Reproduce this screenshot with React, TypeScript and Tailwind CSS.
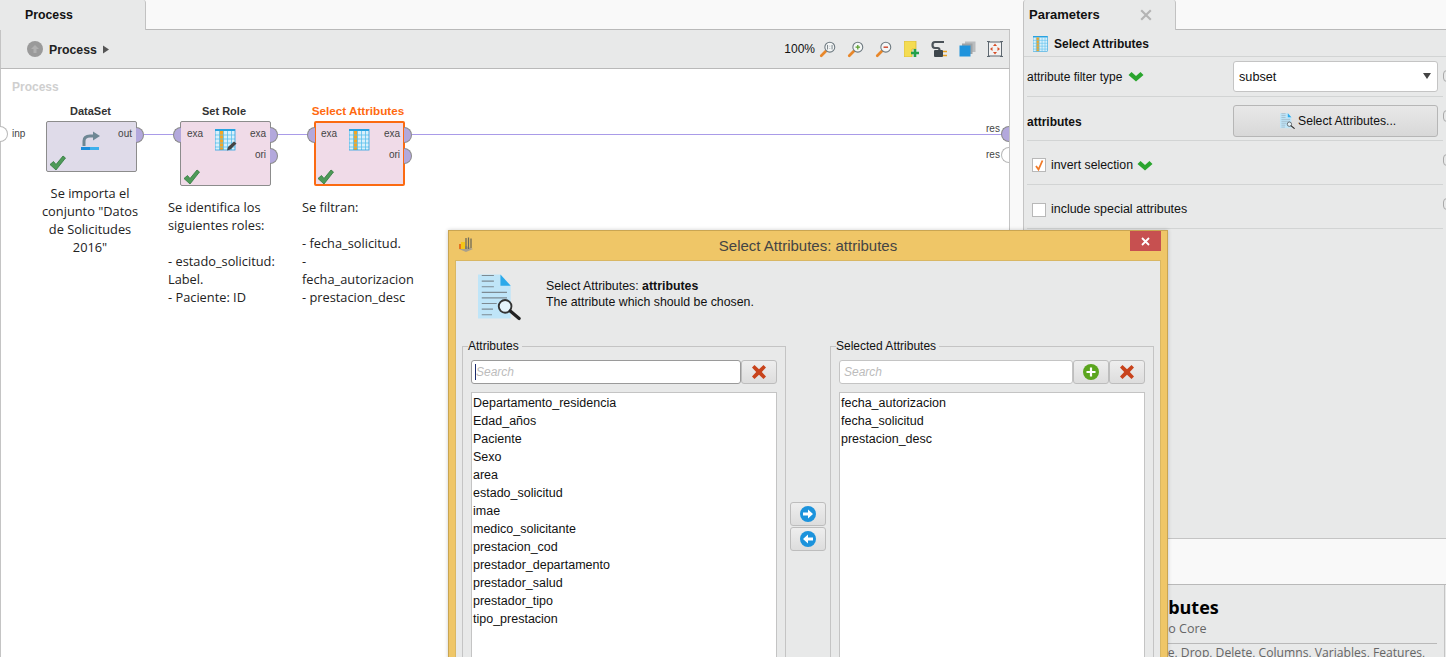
import React from "react";

const SANS = "font-['Liberation_Sans',Arial,sans-serif]";
const OPEN = "font-['Open_Sans','Noto_Sans',sans-serif]";

function Check({ className = "" }: { className?: string }) {
  return (
    <svg viewBox="0 0 17 16" className={className}>
      <path d="M1 9.5 L4.5 6.5 L7 9.5 L14 1 L16.5 3 L7 15 Z" fill="#4e9a58" stroke="#2f7a3c" strokeWidth="0.8" />
    </svg>
  );
}

function GreenChevron() {
  return (
    <svg viewBox="0 0 16 11" className="w-[16px] h-[11px]">
      <path d="M0.5 4 L3.5 1 L8 5 L12.5 1 L15.5 4 L8 10.5 Z" fill="#2aa52e" />
    </svg>
  );
}

function TableIcon({ pen = false, small = false }: { pen?: boolean; small?: boolean }) {
  const cols = [3, 7, 11, 15];
  return (
    <svg viewBox="0 0 22 22" className={small ? "w-[16px] h-[16px]" : "w-[22px] h-[22px]"}>
      <rect x="0" y="0" width="20" height="21" fill="#d8f0fb" />
      <rect x="0" y="0" width="20" height="2" fill="#2aa3e0" />
      <rect x="4.5" y="2" width="4" height="19" fill="#f5a623" />
      {cols.map((c) => (
        <line key={c} x1={c + 1.5} y1="2" x2={c + 1.5} y2="21" stroke="#5cc0ee" strokeWidth="0.8" />
      ))}
      {[6, 10, 14, 18].map((r) => (
        <line key={r} x1="0" y1={r} x2="20" y2={r} stroke="#5cc0ee" strokeWidth="0.8" />
      ))}
      <rect x="0" y="0" width="20" height="21" fill="none" stroke="#2aa3e0" strokeWidth="0.8" />
      {pen && <path d="M12 21.5 L13 18 L19 12.5 L21.5 14.5 L15.5 20.5 Z" fill="#444" />}
    </svg>
  );
}

function Port({ side, filled = true, className = "" }: { side: "l" | "r"; filled?: boolean; className?: string }) {
  const base = filled ? "bg-[#b3a8dc] border-[#8a8a8a]" : "bg-white border-[#b8b8b8]";
  return (
    <div
      className={`absolute w-[8px] h-[16px] border ${base} ${
        side === "r" ? "rounded-r-[8px] border-l-0" : "rounded-l-[8px] border-r-0"
      } ${className}`}
    />
  );
}

function PortLabel({ children, className = "" }: { children: React.ReactNode; className?: string }) {
  return <span className={`absolute text-[10px] leading-[12px] text-[#444] ${SANS} ${className}`}>{children}</span>;
}

function Magnifier({ mark, className = "" }: { mark: "1" | "+" | "-"; className?: string }) {
  return (
    <svg viewBox="0 0 20 20" className={`w-[18px] h-[18px] ${className}`}>
      <line x1="2.5" y1="17.5" x2="8" y2="12" stroke="#e8872a" strokeWidth="3" strokeLinecap="round" />
      <circle cx="12" cy="8" r="5.5" fill="#f4f6f6" stroke="#6e7a80" strokeWidth="1.2" />
      {mark === "+" && <path d="M9.5 8 H14.5 M12 5.5 V10.5" stroke="#5aa02c" strokeWidth="1.4" />}
      {mark === "-" && <path d="M9.5 8 H14.5" stroke="#d0452a" strokeWidth="1.6" />}
      {mark === "1" && <path d="M9.5 5.5 V10.5 M14.5 5.5 V10.5 M12 6.5 V7 M12 9 V9.5" stroke="#6e7a80" strokeWidth="1" />}
    </svg>
  );
}

function RedX({ className = "" }: { className?: string }) {
  return (
    <svg viewBox="0 0 16 16" className={className}>
      <path d="M1 3.5 L3.5 1 L8 5.2 L12.5 1 L15 3.5 L10.8 8 L15 12.5 L12.5 15 L8 10.8 L3.5 15 L1 12.5 L5.2 8 Z" fill="#c8431c" />
    </svg>
  );
}

function ArrowCircle({ dir }: { dir: "r" | "l" }) {
  return (
    <svg viewBox="0 0 16 16" className="w-[16px] h-[16px]">
      <circle cx="8" cy="8" r="8" fill="#1c93dc" />
      <path
        d={dir === "r" ? "M3 6.5 H8 V3.5 L13 8 L8 12.5 V9.5 H3 Z" : "M13 6.5 H8 V3.5 L3 8 L8 12.5 V9.5 H13 Z"}
        fill="#ffffff"
      />
    </svg>
  );
}

function SmallBtn({ children, className = "" }: { children: React.ReactNode; className?: string }) {
  return (
    <div
      className={`flex items-center justify-center shrink-0 w-[36px] h-[24px] rounded-[3px] border border-[#bdbdbd] bg-gradient-to-b from-[#eeeeee] to-[#dddddd] ${className}`}
    >
      {children}
    </div>
  );
}

function DocIcon({ className = "" }: { className?: string }) {
  return (
    <svg viewBox="0 0 46 50" className={className}>
      <path d="M0 1 H24 L35 13 V48 H0 Z" fill="#bfe5f8" />
      <path d="M24 1 L35 13 H24 Z" fill="#2aa9ea" />
      <path d="M4 3 H17 M4 9 H17 M4 15 H17 M4 21 H31 M4 27 H31 M4 33 H20 M4 39 H16 M4 45 H15" stroke="#7d8a92" strokeWidth="1.2" transform="translate(0,-1)" />
      <circle cx="29" cy="35" r="6.8" fill="#e6f4fb" stroke="#333" strokeWidth="2" />
      <line x1="34.5" y1="40" x2="44" y2="48" stroke="#222" strokeWidth="3.4" strokeLinecap="round" />
    </svg>
  );
}

const NODE_PINK = "bg-[#f0dbe8]";

function Comment({ children, className = "" }: { children: React.ReactNode; className?: string }) {
  return <div className={`absolute text-[12.8px] leading-[18px] text-[#222] whitespace-pre-line ${OPEN} ${className}`}>{children}</div>;
}

function ParamRow({ children, h, className = "" }: { children: React.ReactNode; h: string; className?: string }) {
  return (
    <div className={`flex items-center shrink-0 ${h} ${className} ml-[3px] mr-[3px] border-b border-[#d2d4d4] relative`}>
      {children}
      <div className="absolute right-[-8px] top-[13px] w-[8px] h-[12px] rounded-full border border-[#aaa]" />
    </div>
  );
}

function AttrList({ items, className = "" }: { items: string[]; className?: string }) {
  return (
    <div className={`bg-white border border-[#c4c4c4] h-[300px] pt-[1px] ${className}`}>
      {items.map((t) => (
        <div key={t} className="h-[18px] leading-[18px] pl-[1px] text-[12.5px] text-[#111]">
          {t}
        </div>
      ))}
    </div>
  );
}

export default function App() {
  return (
    <div className={`relative w-[1446px] h-[657px] overflow-hidden bg-[#f9f9f9] flex ${SANS}`}>
      {/* Left: process */}
      <div className="w-[1010px] shrink-0 flex flex-col">
        <div className="h-[30px] shrink-0 flex border-b border-[#b9b9b9]">
          <div className="w-[146px] h-[30px] bg-[#e8e9e9] border-r border-[#c2c2c2] rounded-tr-[3px] pl-[25px] pt-[7px] text-[12.3px] leading-[16px] font-bold text-[#111]">
            Process
          </div>
        </div>
        <div className="h-[39px] shrink-0 bg-[#e8e9e9] border-b border-[#b9b9b9] border-l border-r flex items-center pl-[26px] pr-[6px] border-x-[#c4c4c4]">
          <div className="w-[16px] h-[16px] rounded-full bg-[#9a9a9a] flex items-center justify-center">
            <svg viewBox="0 0 10 10" className="w-[10px] h-[10px]">
              <path d="M5 1 L9 5 H6.5 V9 H3.5 V5 H1 Z" fill="#b0b0b0" />
            </svg>
          </div>
          <span className="ml-[6px] mt-[3px] text-[12.3px] font-bold text-[#222]">Process</span>
          <svg viewBox="0 0 6 8" className="ml-[6px] w-[6px] h-[9px]">
            <path d="M0 0 L6 4 L0 8 Z" fill="#555" />
          </svg>
          <div className="ml-auto flex items-center">
            <span className="text-[12px] text-[#111] mr-[4px]">100%</span>
            <Magnifier mark="1" />
            <Magnifier mark="+" className="ml-[10px]" />
            <Magnifier mark="-" className="ml-[10px]" />
            <svg viewBox="0 0 16 16" className="ml-[11px] w-[16px] h-[16px]">
              <path d="M0 0 H12 V8 H8 V16 H0 Z" fill="#f4dc52" stroke="#d8b93a" strokeWidth="0.8" />
              <path d="M11 8 V16 M7 12 H15" stroke="#22a04a" strokeWidth="2.6" />
            </svg>
            <svg viewBox="0 0 18 18" className="ml-[11px] w-[18px] h-[18px]">
              <path d="M13 2 H4 Q1.5 2 1.5 5 Q1.5 8 4 8 H6.5 Q8.5 8 8.5 10 Q8.5 11 7 11" fill="none" stroke="#4a5258" strokeWidth="2.2" />
              <rect x="3" y="10" width="9" height="7" rx="1" fill="#3e464c" />
              <path d="M12 11.5 H16 M12 15.5 H16" stroke="#e8a020" strokeWidth="1.6" />
            </svg>
            <svg viewBox="0 0 17 16" className="ml-[10px] w-[17px] h-[16px]">
              <rect x="6" y="0.5" width="10.5" height="10.5" fill="#b9bcbe" />
              <rect x="3" y="2.5" width="10.5" height="10.5" fill="#9ea2a5" />
              <rect x="0.5" y="4.5" width="11" height="11" fill="#1f93dc" />
            </svg>
            <svg viewBox="0 0 16 18" className="ml-[11px] w-[16px] h-[18px]">
              <rect x="1.5" y="2" width="13" height="14" fill="#f3f3f3" stroke="#5e6870" strokeWidth="1" />
              <path d="M0 1.5 H3 M13 1.5 H16 M0 16.5 H3 M13 16.5 H16" stroke="#5e6870" strokeWidth="1.2" />
              <path d="M8 3.5 L10 6 H6 Z M8 14.5 L10 12 H6 Z M3 9 L5.5 7 V11 Z M13 9 L10.5 7 V11 Z" fill="#d8502a" />
            </svg>
          </div>
        </div>

        {/* Canvas */}
        <div className="relative flex-1 bg-white border-l border-r border-[#c4c4c4]">
          <div className="absolute left-[11px] top-[11px] text-[12px] leading-[14px] font-bold text-[#cfcfcf]">Process</div>

          {/* connections */}
          <div className="absolute left-[143px] top-[65px] w-[30px] h-[1px] bg-[#a99be8]" />
          <div className="absolute left-[277px] top-[65px] w-[30px] h-[1px] bg-[#a99be8]" />
          <div className="absolute left-[411px] top-[65px] w-[592px] h-[1px] bg-[#a99be8]" />

          {/* input port */}
          <Port side="r" filled={false} className="left-[-1px] top-[57px]" />
          <PortLabel className="left-[11px] top-[59px]">inp</PortLabel>

          {/* DataSet */}
          <div className="absolute left-[-1px] top-[36px] w-[181px] text-center text-[11px] leading-[13px] font-bold text-[#333]">DataSet</div>
          <div className="absolute left-[45px] top-[52px] w-[91px] h-[51px] bg-[#dfdbe9] border border-[#8c8c8c] rounded-[2px]">
            <PortLabel className="right-[4px] top-[6px]">out</PortLabel>
            <svg viewBox="0 0 20 20" className="absolute left-[34px] top-[9px] w-[20px] h-[20px]">
              <path d="M3 15 V10 Q3 5 9 5 H13" fill="none" stroke="#6e8794" strokeWidth="3" />
              <path d="M12 0.5 L19 5 L12 9.5 Z" fill="#6e8794" />
              <rect x="0" y="16" width="9" height="3" fill="#1c8ddb" />
              <rect x="9" y="16" width="9" height="3" fill="#3fb0ec" />
            </svg>
            <Check className="absolute left-[2px] top-[33px] w-[17px] h-[16px]" />
            <Port side="r" className="left-[89px] top-[5px]" />
          </div>
          <Comment className="left-[38px] top-[115px] w-[102px] text-center">{'Se importa el\nconjunto "Datos\nde Solicitudes\n2016"'}</Comment>

          {/* Set Role */}
          <div className="absolute left-[133px] top-[36px] w-[180px] text-center text-[11px] leading-[13px] font-bold text-[#333]">Set Role</div>
          <div className={`absolute left-[179px] top-[52px] w-[91px] h-[65px] ${NODE_PINK} border border-[#8c8c8c] rounded-[2px]`}>
            <PortLabel className="left-[6px] top-[6px]">exa</PortLabel>
            <PortLabel className="right-[4px] top-[6px]">exa</PortLabel>
            <PortLabel className="right-[4px] top-[27px]">ori</PortLabel>
            <div className="absolute left-[34px] top-[7px]"><TableIcon pen /></div>
            <Check className="absolute left-[2px] top-[47px] w-[17px] h-[16px]" />
            <Port side="l" className="left-[-8px] top-[5px]" />
            <Port side="r" className="left-[89px] top-[5px]" />
            <Port side="r" className="left-[89px] top-[26px]" />
          </div>
          <Comment className="left-[167px] top-[129px] w-[115px]">{"Se identifica los\nsiguientes roles:\n\n- estado_solicitud:\nLabel.\n- Paciente: ID"}</Comment>

          {/* Select Attributes */}
          <div className="absolute left-[267px] top-[35px] w-[180px] text-center text-[11.7px] leading-[13px] font-bold text-[#ff6a10]">Select Attributes</div>
          <div className={`absolute left-[313px] top-[52px] w-[91px] h-[65px] ${NODE_PINK} border-2 border-[#fb6a12] rounded-[2px]`}>
            <PortLabel className="left-[5px] top-[5px]">exa</PortLabel>
            <PortLabel className="right-[3px] top-[5px]">exa</PortLabel>
            <PortLabel className="right-[3px] top-[26px]">ori</PortLabel>
            <div className="absolute left-[33px] top-[6px]"><TableIcon /></div>
            <Check className="absolute left-[1px] top-[46px] w-[17px] h-[16px]" />
            <Port side="l" className="left-[-9px] top-[4px]" />
            <Port side="r" className="left-[88px] top-[4px]" />
            <Port side="r" className="left-[88px] top-[25px]" />
          </div>
          <Comment className="left-[301px] top-[129px] w-[118px]">{"Se filtran:\n\n- fecha_solicitud.\n-\nfecha_autorizacion\n- prestacion_desc"}</Comment>

          {/* result ports */}
          <PortLabel className="left-[985px] top-[54px]">res</PortLabel>
          <PortLabel className="left-[985px] top-[80px]">res</PortLabel>
          <Port side="l" className="left-[1000px] top-[57px]" />
          <Port side="l" filled={false} className="left-[1000px] top-[78px]" />
        </div>
      </div>

      <div className="w-[13px] shrink-0" />

      {/* Right: parameters */}
      <div className="flex-1 flex flex-col min-w-0">
        <div className="h-[30px] shrink-0 flex border-b border-[#b9b9b9]">
          <div className="w-[153px] h-[30px] bg-[#e8e9e9] border-l border-r border-[#c2c2c2] rounded-t-[3px] pl-[5px] pt-[7px] flex text-[13px] leading-[16px] font-bold text-[#111]">
            Parameters
            <svg viewBox="0 0 10 10" className="ml-[40px] mt-[2px] w-[12px] h-[12px]">
              <path d="M1 1 L9 9 M9 1 L1 9" stroke="#b4b4b4" strokeWidth="1.8" />
            </svg>
          </div>
        </div>
        <div className="h-[509px] shrink-0 bg-[#e8e9e9] border-l border-b border-[#c4c4c4] flex flex-col overflow-hidden">
          <div className="h-[27px] shrink-0 flex items-center pl-[9px] pt-[1px] border-b border-[#d2d4d4]">
            <TableIcon small />
            <span className="ml-[5px] text-[12px] font-bold text-[#111]">Select Attributes</span>
          </div>
          <ParamRow h="h-[40px]">
            <span className="text-[12px] text-[#111]">attribute filter type</span>
            <span className="ml-[6px] flex"><GreenChevron /></span>
            <div className="absolute left-[206px] top-[4px] w-[205px] h-[31px] bg-white border border-[#c4c4c4] rounded-[3px] flex items-center pl-[5px] pt-[2px] text-[12.7px] text-[#111]">
              subset
              <svg viewBox="0 0 8 6" className="absolute right-[6px] top-[11px] w-[8px] h-[6px]">
                <path d="M0 0 H8 L4 6 Z" fill="#444" />
              </svg>
            </div>
          </ParamRow>
          <ParamRow h="h-[44px]" className="pt-[7px]">
            <span className="text-[12px] font-bold text-[#111]">attributes</span>
            <div className="absolute left-[206px] top-[8px] w-[205px] h-[32px] border border-[#b6b6b6] rounded-[3px] bg-gradient-to-b from-[#e8e8e8] to-[#d8d8d8] flex items-center pl-[46px] text-[12.2px] text-[#111]">
              <DocIcon className="w-[15px] h-[16px] mr-[3px]" />
              Select Attributes...
            </div>
          </ParamRow>
          <ParamRow h="h-[44px]" className="pt-[5px]">
            <div className="ml-[5px] w-[14px] h-[14px] border border-[#b8b8b8] bg-white flex items-center justify-center">
              <svg viewBox="0 0 12 12" className="w-[12px] h-[12px]">
                <path d="M3 7 L5.5 10.5 L9.5 1.5" fill="none" stroke="#f07a28" strokeWidth="1.8" />
              </svg>
            </div>
            <span className="ml-[5px] text-[12.3px] text-[#111]">invert selection</span>
            <span className="ml-[4px] flex"><GreenChevron /></span>
          </ParamRow>
          <ParamRow h="h-[44px]" className="pt-[6px]">
            <div className="ml-[5px] w-[14px] h-[14px] border border-[#b8b8b8] bg-white" />
            <span className="ml-[5px] text-[12.45px] text-[#111]">include special attributes</span>
          </ParamRow>
        </div>
        <div className="h-[46px] shrink-0 bg-[#f9f9f9] border-b border-[#b9b9b9]" />
        <div className={`flex-1 bg-[#e8e9e9] border-l border-[#c4c4c4] pl-[44px] relative overflow-hidden ${OPEN}`}>
          <div className="mt-[11px] text-[18px] leading-[22px] font-bold text-black whitespace-nowrap">Select Attributes</div>
          <div className="mt-[2px] text-[12.5px] leading-[18px] text-[#666] whitespace-nowrap">RapidMiner Studio Core</div>
          <div className="absolute left-[140px] top-[58px] w-[273px] h-[1px] bg-[#b9b9b9]" />
          <div className="absolute left-[70px] top-[60px] text-[12.15px] leading-[16px] text-[#666] whitespace-nowrap">Keep, Remove, Drop, Delete, Columns, Variables, Features,</div>
          <div className="absolute right-[1px] top-0 bottom-0 w-[1px] bg-[#c4c4c4]" />
        </div>
      </div>

      {/* Dialog window */}
      <div className="absolute left-[448px] top-[230px] w-[720px] h-[500px] bg-[#efc667] border border-[#c9a552] shadow-[0_0_4px_rgba(0,0,0,0.2)] flex flex-col">
        <div className="relative h-[29px] shrink-0 flex items-center justify-center pt-[2px] text-[15px] text-[#444]">
          <svg viewBox="0 0 16 16" className="absolute left-[9px] top-[6px] w-[16px] h-[16px]">
            <path d="M1 12 L8 15 L15 12 L8 9 Z" fill="#a9a08c" />
            <path d="M1 7 H5 V12 H1 Z" fill="#e8741e" />
            <path d="M3 5 H7 V12 H3 Z" fill="#f5c518" />
            <path d="M8 1 V12 M10.5 0.5 V12 M13 1.5 V11" stroke="#6e6a58" strokeWidth="1.3" />
          </svg>
          Select Attributes: attributes
          <div className="absolute right-[6px] top-0 w-[31px] h-[20px] bg-[#c75050] flex items-center justify-center">
            <svg viewBox="0 0 9 9" className="w-[9px] h-[9px]">
              <path d="M1 1 L8 8 M8 1 L1 8" stroke="#fff" strokeWidth="1.8" />
            </svg>
          </div>
        </div>
        <div className="mx-[6px] flex-1 bg-[#e8e9e9] border border-[#d9b763] flex flex-col">
          <div className="h-[78px] shrink-0 flex">
            <DocIcon className="ml-[22px] mt-[12px] w-[43px] h-[48px]" />
            <div className="ml-[25px] mt-[17px] text-[12.35px] leading-[16px] text-[#111]">
              <div>
                Select Attributes: <b>attributes</b>
              </div>
              <div>The attribute which should be chosen.</div>
            </div>
          </div>
          <div className="flex pl-[6px] items-start">
            <fieldset className="w-[324px] h-[400px] border border-[#c4c4c4] pl-[8px] pr-[8px] shrink-0">
              <legend className="ml-[-3px] pr-[3px] text-[12px] leading-[14px] text-[#111]">Attributes</legend>
              <div className="flex mt-[7px]">
                <div className="relative w-[270px] h-[24px] bg-white border border-[#9a9a9a] rounded-[3px] pl-[4px] text-[12px] leading-[22px] italic text-[#bcbcbc]">
                  Search
                  <div className="absolute left-[3px] top-[3px] w-[1px] h-[16px] bg-[#1a2a6c]" />
                </div>
                <SmallBtn><RedX className="w-[16px] h-[16px]" /></SmallBtn>
              </div>
              <AttrList
                className="mt-[8px] w-[306px]"
                items={[
                  "Departamento_residencia",
                  "Edad_años",
                  "Paciente",
                  "Sexo",
                  "area",
                  "estado_solicitud",
                  "imae",
                  "medico_solicitante",
                  "prestacion_cod",
                  "prestador_departamento",
                  "prestador_salud",
                  "prestador_tipo",
                  "tipo_prestacion",
                ]}
              />
            </fieldset>
            <div className="w-[44px] shrink-0 pt-[163px] flex flex-col items-center gap-[1px]">
              <SmallBtn><ArrowCircle dir="r" /></SmallBtn>
              <SmallBtn><ArrowCircle dir="l" /></SmallBtn>
            </div>
            <fieldset className="w-[324px] h-[400px] border border-[#c4c4c4] pl-[8px] pr-[8px] shrink-0">
              <legend className="ml-[-3px] pr-[3px] text-[12px] leading-[14px] text-[#111]">Selected Attributes</legend>
              <div className="flex mt-[7px]">
                <div className="w-[234px] h-[24px] bg-white border border-[#c4c4c4] rounded-[3px] pl-[4px] text-[12px] leading-[22px] italic text-[#bcbcbc]">
                  Search
                </div>
                <SmallBtn>
                  <svg viewBox="0 0 16 16" className="w-[16px] h-[16px]">
                    <circle cx="8" cy="8" r="8" fill="#5ba51e" />
                    <path d="M8 3.5 V12.5 M3.5 8 H12.5" stroke="#fff" strokeWidth="2.2" />
                  </svg>
                </SmallBtn>
                <SmallBtn><RedX className="w-[16px] h-[16px]" /></SmallBtn>
              </div>
              <AttrList className="mt-[8px] w-[306px]" items={["fecha_autorizacion", "fecha_solicitud", "prestacion_desc"]} />
            </fieldset>
          </div>
        </div>
      </div>
    </div>
  );
}
